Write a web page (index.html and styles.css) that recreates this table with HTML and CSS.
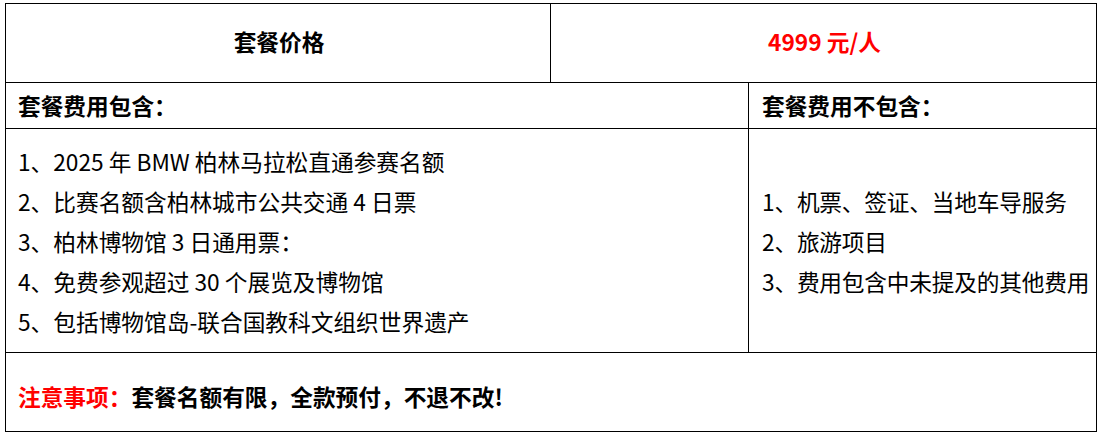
FILE: index.html
```html
<!DOCTYPE html>
<html lang="zh-CN">
<head>
<meta charset="utf-8">
<title>套餐价格</title>
<link rel="stylesheet" href="styles.css">
</head>
<body>
<div class="sheet">
  <div class="row row-price">
    <div class="cell cell-label">套餐价格</div>
    <div class="cell cell-value">4999 元/人</div>
  </div>
  <div class="row row-head">
    <div class="cell cell-main">套餐费用包含：</div>
    <div class="cell cell-side">套餐费用不包含：</div>
  </div>
  <div class="row row-body">
    <div class="cell cell-main">
      <ul class="list list-incl">
        <li>1、2025 年 BMW 柏林马拉松直通参赛名额</li>
        <li>2、比赛名额含柏林城市公共交通 4 日票</li>
        <li>3、柏林博物馆 3 日通用票：</li>
        <li>4、免费参观超过 30 个展览及博物馆</li>
        <li>5、包括博物馆岛-联合国教科文组织世界遗产</li>
      </ul>
    </div>
    <div class="cell cell-side">
      <ul class="list list-excl">
        <li>1、机票、签证、当地车导服务</li>
        <li>2、旅游项目</li>
        <li>3、费用包含中未提及的其他费用</li>
      </ul>
    </div>
  </div>
  <div class="row row-note">
    <div class="cell cell-note"><span class="note-label">注意事项：</span>套餐名额有限，全款预付，不退不改!</div>
  </div>
</div>
</body>
</html>
```

FILE: styles.css
```css
* { box-sizing: border-box; }
html, body { margin: 0; padding: 0; background: #fff; }
body {
  font-family: "Noto Sans CJK SC", "Noto Sans", sans-serif;
  color: #000;
  font-size: 22.7px;
}
.sheet {
  margin: 3px 0 0 5px;
  width: 1092px;
  border: 1px solid #000;
}
.row {
  display: flex;
  border-bottom: 1px solid #000;
}
.row:last-child { border-bottom: none; }
.cell { display: flex; align-items: center; }

.row-price { height: 79px; }
.row-price .cell { padding-bottom: 3px; }
.cell-label {
  width: 545px;
  border-right: 1px solid #000;
  justify-content: center;
  font-weight: 700;
  padding-left: 2px;
}
.cell-value {
  flex: 1;
  justify-content: center;
  font-weight: 700;
  color: #ff0000;
  padding-left: 2px;
}

.row-head { height: 46px; }
.row-head .cell { font-weight: 700; padding-top: 0; }
.cell-main {
  width: 743px;
  border-right: 1px solid #000;
  padding-left: 12px;
}
.cell-side {
  flex: 1;
  padding-left: 13px;
}

.row-body { height: 224px; }
.row-body .cell { padding-top: 3px; }
.list {
  list-style: none;
  margin: 0;
  padding: 0;
}
.list li { line-height: 40px; white-space: nowrap; }
.list-excl li { letter-spacing: -0.2px; }

.row-note { height: 78px; }
.cell-note {
  padding-left: 12px;
  font-weight: 700;
  padding-top: 8px;
}
.note-label { color: #ff0000; }
```
